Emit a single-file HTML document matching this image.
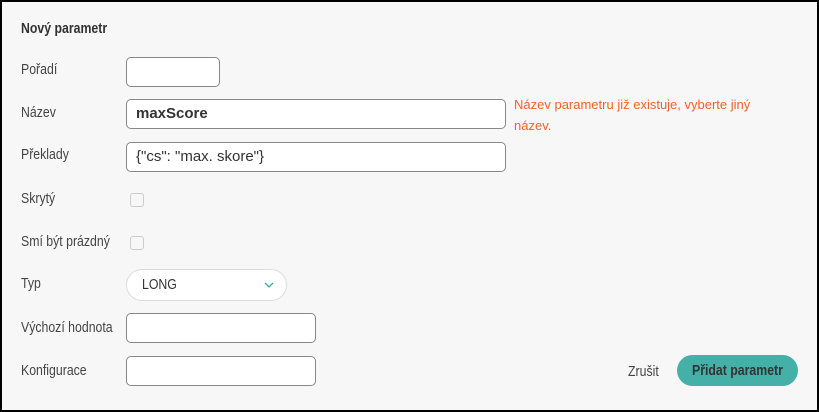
<!DOCTYPE html>
<html><head><meta charset="utf-8"><style>
*{box-sizing:border-box;margin:0;padding:0}
body{width:819px;height:412px;background:#000;position:relative;overflow:hidden}
.panel{position:absolute;left:2px;top:2px;width:815px;height:408px;background:#f7f7f7}
.l{position:absolute;left:21px;font-family:"Liberation Sans",sans-serif;font-size:15px;color:#444;transform:scaleX(0.82);transform-origin:0 0;white-space:nowrap}
.in{position:absolute;left:126px;background:#fff;border:1px solid #888;border-radius:5px;height:30px;font-family:"Liberation Sans",sans-serif;font-size:15px;color:#333;padding-left:9px;line-height:28px}
.cb{position:absolute;left:130px;width:14px;height:14px;border:1px solid #ccc;border-radius:3px;background:#f7f7f7}
</style></head><body>
<div class="panel"></div>
<div class="l" style="top:20px;font-weight:bold;color:#333">Nový parametr</div>
<div class="l" style="top:61px">Pořadí</div>
<div class="in" style="top:57px;width:94px"></div>
<div class="l" style="top:104px">Název</div>
<div class="in" style="top:99px;width:380px;font-weight:bold;font-size:15px">maxScore</div>
<div style="position:absolute;left:514px;top:94px;width:272px;font-family:'Liberation Sans',sans-serif;font-size:13px;line-height:21px;color:#f0632a">Název parametru již existuje, vyberte jiný název.</div>
<div class="l" style="top:146px">Překlady</div>
<div class="in" style="top:142px;width:380px">{"cs": "max. skore"}</div>
<div class="l" style="top:190px">Skrytý</div>
<div class="cb" style="top:193px"></div>
<div class="l" style="top:233px">Smí být prázdný</div>
<div class="cb" style="top:236px"></div>
<div class="l" style="top:275px">Typ</div>
<div class="in" style="top:269px;width:161px;height:32px;border-radius:16px;border-color:#ddd;padding-left:15px;font-size:15px;line-height:30px"><span style="display:inline-block;transform:scaleX(0.82);transform-origin:0 0">LONG</span>
<svg style="position:absolute;left:137px;top:12px" width="10" height="7" viewBox="0 0 10 7"><path d="M1 1l4 4 4-4" fill="none" stroke="#3aa9a0" stroke-width="1.3"/></svg></div>
<div class="l" style="top:319px">Výchozí hodnota</div>
<div class="in" style="top:313px;width:190px"></div>
<div class="l" style="top:362px">Konfigurace</div>
<div class="in" style="top:356px;width:190px"></div>
<div class="l" style="left:628px;top:363px">Zrušit</div>
<div style="position:absolute;left:677px;top:355px;width:121px;height:31px;border-radius:16px;background:#44b0a8"></div>
<div class="l" style="left:692px;top:362px;font-weight:bold;color:#333">Přidat parametr</div>
</body></html>
